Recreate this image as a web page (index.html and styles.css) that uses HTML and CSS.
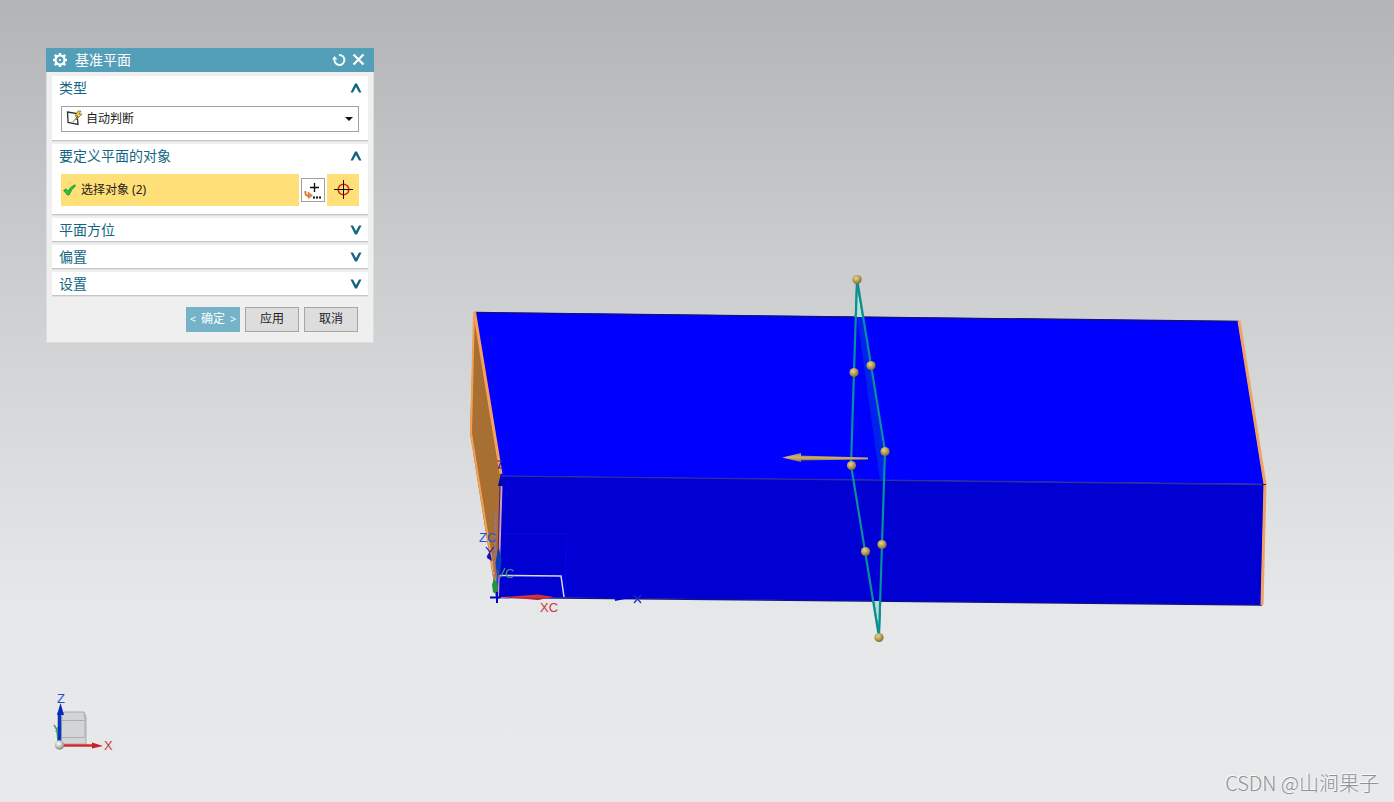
FILE: index.html
```html
<!DOCTYPE html>
<html lang="zh-CN">
<head>
<meta charset="utf-8">
<title>基准平面</title>
<link rel="stylesheet" href="styles.css">
</head>
<body>
<main class="viewport">
  <svg class="scene" viewBox="0 0 1394 802" preserveAspectRatio="xMinYMin slice" role="img" aria-label="模型视图">
    <defs>
      <radialGradient id="ball" cx="0.4" cy="0.35" r="0.65">
        <stop offset="0" stop-color="#e6d594"/>
        <stop offset="0.5" stop-color="#bda459"/>
        <stop offset="1" stop-color="#7d6a38"/>
      </radialGradient>
      <radialGradient id="origin" cx="0.4" cy="0.35" r="0.7">
        <stop offset="0" stop-color="#ffffff"/>
        <stop offset="0.5" stop-color="#c4c4c4"/>
        <stop offset="1" stop-color="#777777"/>
      </radialGradient>
      <linearGradient id="cone" x1="0" y1="0" x2="0" y2="1">
        <stop offset="0" stop-color="#c0353c"/>
        <stop offset="0.4" stop-color="#e0303a"/>
        <stop offset="1" stop-color="#8f1c38"/>
      </linearGradient>
      <linearGradient id="gold" x1="0" y1="0" x2="0" y2="1">
        <stop offset="0" stop-color="#a98c50"/>
        <stop offset="0.5" stop-color="#cdb474"/>
        <stop offset="1" stop-color="#8d713c"/>
      </linearGradient>
    </defs>

    <!-- solid body -->
    <polygon points="474,312 470,433 496,597 501,476" fill="#a86f32"/>
    <polyline points="474,312 471,433 497,594" fill="none" stroke="#f3a055" stroke-width="2"/>
    <polygon points="475,312 1238,321 1264,484 501,476" fill="#0000ff"/>
    <polygon points="501,476 1264,484 1261,605 497,597" fill="#0000d2"/>
    <path d="M475 312.500L1239 321.500M497 597.500L1262 605" stroke="#10108c" stroke-width="1.500"/>
    <path d="M501 476L1264 484.500" stroke="#303096" stroke-width="1.300"/>
    <path d="M474.500 312L501 474" stroke="#f6a05c" stroke-width="3"/>
    <path d="M1239 321L1265 484L1262 605" fill="none" stroke="#f0a164" stroke-width="3"/>
    <path d="M1262 484.500h4" stroke="#30201c"/>

    <!-- datum coordinate system -->
    <path d="M501 533.500H566.500L565 597" fill="none" stroke="#0505ee" stroke-width="1.200"/>
    <path d="M501.500 486L498 597" stroke="#d79ac0" stroke-width="2"/>
    <path d="M500 486L497 592" stroke="#4b235f" stroke-width="1"/>
    <path d="M496 511L494 574L497 596" fill="none" stroke="#9673a9" stroke-width="1.500" stroke-dasharray="5 2"/>
    <polygon points="501,473 498,486 503,486" fill="#0505a8"/>
    <path d="M497.500 461h4l-3 7h4" fill="none" stroke="#32239b" stroke-width="1.200"/>
    <path d="M486 547l4 5l4-5M490 552l-3 5" fill="none" stroke="#1919cc" stroke-width="1.200"/>
    <polygon points="490,552 487,558 492,561" fill="#0808b9"/>
    <polygon points="498.500,546 495.500,563 497,575 500,575 501.500,560" fill="#0b3cbb"/>
    <path d="M498 570L496.500 598" stroke="#2649bc" stroke-width="2"/>
    <path d="M500 575.500L561 576L564 597" fill="none" stroke="#d8d8ee" stroke-width="1.500"/>
    <polygon points="494,578 492,585 493,592 497,595 498,586" fill="#279238"/>
    <path d="M490 597.500h10M497 592v11" stroke="#0000c8" stroke-width="2"/>
    <path d="M501 597.500h8" stroke="#df5a62" stroke-width="1"/>
    <polygon points="503,597 538,594.500 554,597 538,600" fill="url(#cone)"/>
    <polygon points="614,595.500 630,598 615,601" fill="#0000cc"/>
    <path d="M626 598.500h6" stroke="#0000d2"/>
    <text class="axis axis-blue" x="479" y="542">ZC</text>
    <path d="M505 568l-5 10" stroke="#3b9a75" stroke-width="1.200"/>
    <text class="axis axis-green" x="505" y="578">C</text>
    <text class="axis axis-red" x="540" y="612">XC</text>
    <path d="M634 595l7 8M641 595l-7 8" stroke="#1c2ad0" stroke-width="1.200"/>

    <!-- datum plane preview -->
    <polygon points="857,282 854.500,317 863,317" fill="#b5ded8"/>
    <polygon points="873.500,601 881,601 879,635" fill="#b5ded8"/>
    <polygon points="857,317 863,317 884,451 884,480 880,480" fill="#0022ed"/>
    <polygon points="857,279 885,451 879,637 851,465" fill="none" stroke="#078f9e" stroke-width="2.200"/>
    <path d="M857 282L855.500 317M857 282L863 317M873.500 601L879 635L880.500 601" fill="none" stroke="#0b9187" stroke-width="1.500"/>
    <path d="M796 455.500L868 457.500V459.500L796 460.500Z" fill="url(#gold)"/>
    <polygon points="782,457.500 801,453 801,462" fill="url(#gold)"/>
    <g fill="url(#ball)">
      <circle cx="857" cy="279.500" r="4.600"/>
      <circle cx="871" cy="365.500" r="4.600"/>
      <circle cx="854" cy="372.500" r="4.600"/>
      <circle cx="885" cy="451.500" r="4.600"/>
      <circle cx="851.500" cy="465.500" r="4.600"/>
      <circle cx="882" cy="544.500" r="4.600"/>
      <circle cx="865.500" cy="551.500" r="4.600"/>
      <circle cx="879" cy="637.500" r="4.600"/>
    </g>

    <!-- view triad -->
    <path d="M62 713L65 712H84L86 717L86 744H61Z" fill="#d3d4d5" stroke="#aaabac"/>
    <path d="M61 720.500H85M61 737.500H85M84 712L85 720V737" fill="none" stroke="#adaeaf"/>
    <path d="M54 725l3 5l1 12M58 727l-2 5" fill="none" stroke="#4ba158" stroke-width="1.500"/>
    <path d="M62 745.500H95" stroke="#d12a2d" stroke-width="2.500"/>
    <polygon points="92,742.500 103,746 92,748.500" fill="#c92127"/>
    <path d="M59.500 743V712" stroke="#0a35c4" stroke-width="3.500"/>
    <polygon points="60.500,703 57,715 64,715" fill="#0829ba"/>
    <circle cx="59.500" cy="745" r="4.700" fill="url(#origin)"/>
    <text class="axis axis-blue" x="57" y="703">Z</text>
    <text class="axis axis-red" x="104" y="750">X</text>
  </svg>

  <form class="dialog" aria-labelledby="dialog-title">
    <header class="titlebar">
      <svg class="gear" viewBox="0 0 14 14" aria-hidden="true">
        <circle cx="7" cy="7" r="4.500" fill="none" stroke="#fff" stroke-width="2.200"/>
        <path d="M7 0v2.500M7 11.500v2.500M0 7h2.500M11.500 7h2.500M1.800 1.800l2 2M10.200 10.200l2 2M12.200 1.800l-2 2M1.800 12.200l2-2" stroke="#fff" stroke-width="2.600"/>
        <circle cx="7" cy="7" r="1" fill="#fff"/>
      </svg>
      <h1 class="title" id="dialog-title">基准平面</h1>
      <button class="tool" type="button" aria-label="重置">
        <svg viewBox="0 0 14 14" aria-hidden="true">
          <path d="M7 2A5 5 0 1 1 2.500 6" fill="none" stroke="#eef8fb" stroke-width="2"/>
          <path d="M0 6.500L2.500 3L5.500 6.500Z" fill="#eef8fb"/>
        </svg>
      </button>
      <button class="tool" type="button" aria-label="关闭">
        <svg viewBox="0 0 14 14" aria-hidden="true"><path d="M1.500 1.500l10 10M11.500 1.500L1.500 11.500" stroke="#fff" stroke-width="2.200"/></svg>
      </button>
    </header>

    <div class="sections">
      <section class="section">
        <button class="section-head" type="button" aria-expanded="true">类型
          <svg class="chevron" viewBox="0 0 12 10" aria-hidden="true"><path d="M0.500 9.500L5 0.500H7L11.500 9.500H9L6 4L3 9.500Z"/></svg>
        </button>
        <div class="section-body">
          <div class="picker">
            <select class="picker-select" aria-label="类型"><option>自动判断</option></select>
            <svg class="picker-icon" viewBox="0 0 16 16" aria-hidden="true">
              <path d="M1.500 2L11 3.500L12 14.500L2 12.500Z" fill="#f7f9f4" stroke="#343434" stroke-width="1.300"/>
              <path d="M7 12l4-5" stroke="#7a7760"/>
              <path d="M12 1L9 6h3l-2 4l6-6h-3l2-3Z" fill="#f5d23a" stroke="#70602c" stroke-width="0.700"/>
            </svg>
            <svg class="picker-arrow" viewBox="0 0 8 4" aria-hidden="true"><path d="M0 0h8L4 4Z" fill="#111"/></svg>
          </div>
        </div>
      </section>

      <section class="section">
        <button class="section-head" type="button" aria-expanded="true">要定义平面的对象
          <svg class="chevron" viewBox="0 0 12 10" aria-hidden="true"><path d="M0.500 9.500L5 0.500H7L11.500 9.500H9L6 4L3 9.500Z"/></svg>
        </button>
        <div class="section-body selection">
          <button class="select-object" type="button">
            <svg class="check" viewBox="0 0 13 12" aria-hidden="true"><path d="M0.700 6.500L3 4.800L5 7.200Q7.500 2.500 12 0.800L12.300 2Q8.500 5 6 11H4.500Z" fill="#25c83a" stroke="#159126" stroke-width="0.800"/></svg>
            <span class="select-label">选择对象 (2)</span>
          </button>
          <button class="add-point" type="button" aria-label="点对话框">
            <svg viewBox="0 0 22 22" aria-hidden="true">
              <path d="M12.500 4v9M8 8.500h9" stroke="#111" stroke-width="1.400"/>
              <path d="M3.500 12Q2.500 17 7 17" fill="none" stroke="#e3762c" stroke-width="2"/>
              <path d="M6 13L10.500 16.500L6.500 19.500Z" fill="#ef8938" stroke="#b75b22" stroke-width="0.500"/>
              <path d="M11 18.500h2M14 18.500h2M17 18.500h2" stroke="#111" stroke-width="2"/>
            </svg>
          </button>
          <button class="target" type="button" aria-label="选择对象">
            <svg viewBox="0 0 20 20" aria-hidden="true">
              <circle cx="10.500" cy="9.500" r="5.300" fill="none" stroke="#d52a0c" stroke-width="1.600"/>
              <path d="M10.500 0v19M1 9.500h19" stroke="#111" stroke-width="1"/>
            </svg>
          </button>
        </div>
      </section>

      <section class="section">
        <button class="section-head" type="button" aria-expanded="false">平面方位
          <svg class="chevron" viewBox="0 0 12 10" aria-hidden="true"><path d="M0.500 0.500L5 9.500H7L11.500 0.500H9L6 6L3 0.500Z"/></svg>
        </button>
      </section>
      <section class="section">
        <button class="section-head" type="button" aria-expanded="false">偏置
          <svg class="chevron" viewBox="0 0 12 10" aria-hidden="true"><path d="M0.500 0.500L5 9.500H7L11.500 0.500H9L6 6L3 0.500Z"/></svg>
        </button>
      </section>
      <section class="section">
        <button class="section-head" type="button" aria-expanded="false">设置
          <svg class="chevron" viewBox="0 0 12 10" aria-hidden="true"><path d="M0.500 0.500L5 9.500H7L11.500 0.500H9L6 6L3 0.500Z"/></svg>
        </button>
      </section>
    </div>

    <footer class="actions">
      <button class="action action-primary" type="button"><span class="angle">&lt;</span>确定<span class="angle">&gt;</span></button>
      <button class="action" type="button">应用</button>
      <button class="action" type="button">取消</button>
    </footer>
  </form>

  <p class="credit">CSDN @山涧果子</p>
</main>
</body>
</html>
```

FILE: styles.css
```css
* {
  box-sizing: border-box;
}

body {
  margin: 0;
  font-family: "Noto Sans", "Noto Sans CJK SC", sans-serif;
  font-size: 12px;
  color: #1c1c1c;
}

button,
select {
  margin: 0;
  padding: 0;
  border: 0;
  border-radius: 0;
  background: none;
  color: inherit;
  font: inherit;
}

svg {
  display: block;
}

.viewport {
  position: relative;
  min-height: 100vh;
  overflow: hidden;
  background: linear-gradient(#b3b4b6 0%, #cbcdce 34%, #e5e7e9 75%, #e7e9eb 100%);
}

.scene {
  position: absolute;
  inset: 0;
  width: 100%;
  height: 100%;
}

.axis {
  font-family: "Liberation Sans", Arial, sans-serif;
  font-size: 13px;
}

.axis-blue {
  fill: #2450d8;
}

.axis-green {
  fill: #3b9a75;
}

.axis-red {
  fill: #c63b3e;
}

.dialog {
  position: absolute;
  left: 46px;
  top: 48px;
  width: 328px;
  background: #efefef;
  box-shadow: inset 0 0 0 1px #dcdddd;
}

.titlebar {
  display: flex;
  align-items: center;
  gap: 6px;
  height: 24px;
  padding: 0 8px 0 7px;
  background: #549fb8;
  color: #fff;
}

.gear {
  width: 14px;
  height: 14px;
}

.title {
  flex: 1;
  margin: 0;
  padding-left: 2px;
  font-size: 14px;
  font-weight: 400;
  line-height: 24px;
}

.tool,
.tool svg {
  width: 14px;
  height: 14px;
}

.sections {
  display: flex;
  flex-direction: column;
  gap: 3px;
  padding: 4px 6px 0;
}

.section {
  background: #fff;
  border-bottom: 1px solid #c6c6c8;
  box-shadow: 0 1px 0 #e2e2e2;
}

.section-head {
  display: flex;
  align-items: center;
  justify-content: space-between;
  width: 100%;
  height: 23px;
  padding: 0 6px 0 7px;
  color: #126583;
  font-size: 14px;
  line-height: 20px;
}

.chevron {
  width: 12px;
  height: 10px;
  fill: #126583;
}

.section-body {
  padding: 7px 9px 8px;
}

.picker {
  position: relative;
}

.picker-select {
  display: block;
  width: 100%;
  height: 26px;
  padding: 0 20px 2px 24px;
  appearance: none;
  background: #fff;
  border: 1px solid #a0a0a0;
}

.picker-icon {
  position: absolute;
  left: 5px;
  top: 4px;
  width: 16px;
  height: 16px;
  pointer-events: none;
}

.picker-arrow {
  position: absolute;
  right: 6px;
  top: 11px;
  width: 8px;
  height: 4px;
  pointer-events: none;
}

.selection {
  display: flex;
  align-items: center;
  gap: 2px;
}

.select-object {
  display: flex;
  flex: 1;
  align-items: center;
  gap: 5px;
  height: 32px;
  padding: 0 2px;
  background: #ffdf78;
}

.select-label {
  padding-bottom: 2px;
}

.check {
  width: 13px;
  height: 12px;
}

.add-point {
  width: 24px;
  height: 24px;
  background: #fff;
  border: 1px solid #a0a0a0;
}

.target {
  display: grid;
  place-items: center;
  width: 32px;
  height: 32px;
  background: #ffdf78;
}

.target svg {
  width: 20px;
  height: 20px;
}

.actions {
  display: flex;
  justify-content: flex-end;
  gap: 5px;
  padding: 11px 16px;
}

.action {
  width: 54px;
  height: 25px;
  padding-bottom: 2px;
  background: #dddddd;
  border: 1px solid #a6a6a6;
  line-height: 20px;
}

.action-primary {
  display: flex;
  align-items: center;
  justify-content: center;
  gap: 5px;
  background: #74b3c8;
  border-color: #74b3c8;
  color: #fff;
}

.angle {
  font-size: 11px;
}

.credit {
  position: absolute;
  right: 15px;
  bottom: 5px;
  margin: 0;
  color: #8f9193;
  font-family: "Noto Sans CJK SC", sans-serif;
  font-size: 20px;
  font-weight: 300;
  line-height: 28px;
  text-shadow: -1px -1px 0 #f8f9f9;
}
```
